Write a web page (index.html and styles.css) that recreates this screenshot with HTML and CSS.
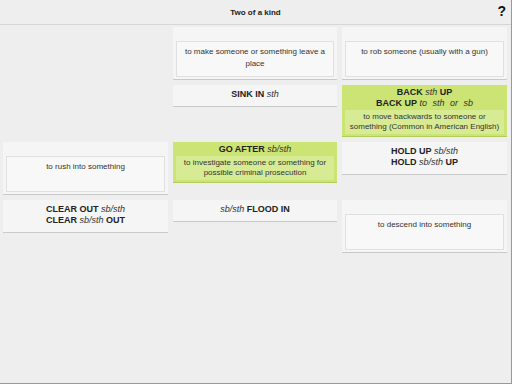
FILE: index.html
```html
<!DOCTYPE html>
<html lang="en">
  <head>
    <meta charset="UTF-8" />
    <meta name="viewport" content="width=device-width, initial-scale=1.0" />
    <title>Two of a kind</title>
    <link rel="stylesheet" href="styles.css">
  </head>
  <body>
    <div class="topbar">
      <span class="title">Two of a kind</span>
      <span class="help">?</span>
    </div>

    <div class="board">
      <div class="slot"></div>
      <div class="card def">
        <div class="meaning">to make someone or something leave a place</div>
      </div>
      <div class="card def">
        <div class="meaning">to rob someone (usually with a gun)</div>
      </div>

      <div class="slot"></div>
      <div class="card phrase">
        <p><b>SINK IN</b> <i>sth</i></p>
      </div>
      <div class="card phrase matched">
        <p><b>BACK</b> <i>sth</i> <b>UP</b></p>
        <p><b>BACK UP</b> <i class="spread">to sth or sb</i></p>
        <div class="meaning">to move backwards to someone or something (Common in American English)</div>
      </div>

      <div class="card def">
        <div class="meaning">to rush into something</div>
      </div>
      <div class="card phrase matched">
        <p><b>GO AFTER</b> <i>sb/sth</i></p>
        <div class="meaning">to investigate someone or something for possible criminal prosecution</div>
      </div>
      <div class="card phrase">
        <p><b>HOLD UP</b> <i>sb/sth</i></p>
        <p><b>HOLD</b> <i>sb/sth</i> <b>UP</b></p>
      </div>

      <div class="card phrase">
        <p><b>CLEAR OUT</b> <i>sb/sth</i></p>
        <p><b>CLEAR</b> <i>sb/sth</i> <b>OUT</b></p>
      </div>
      <div class="card phrase">
        <p><i>sb/sth</i> <b>FLOOD IN</b></p>
      </div>
      <div class="card def">
        <div class="meaning">to descend into something</div>
      </div>
    </div>
  </body>
</html>
```

FILE: styles.css
```css
html {
  background-color: #eee;
}
body {
  font-family: "Liberation Sans", Arial, sans-serif;
  color: #222;
  margin: 0;
  width: 512px;
  height: 384px;
  box-sizing: border-box;
  border-right: 1px solid #999;
  border-bottom: 1px solid #999;
  background-color: #eee;
}
.topbar {
  height: 24px;
  border-bottom: 1px solid #d6d6d6;
  display: flex;
  align-items: center;
  justify-content: center;
  position: relative;
}
.title {
  font-size: 8px;
  font-weight: bold;
  color: #222;
}
.help {
  position: absolute;
  right: 5px;
  top: 3px;
  font-size: 14px;
  font-weight: bold;
  color: #111;
}
.board {
  display: grid;
  grid-template-columns: 165px 164px 165px;
  column-gap: 5px;
  row-gap: 5px;
  align-items: start;
  padding: 2px 3px 0 3px;
}
.card {
  background-color: #f5f5f5;
  border-bottom: 1px solid #c9c9c9;
  text-align: center;
}
.def {
  padding: 14px 3px 2px 3px;
}
.def .meaning {
  background-color: #f8f8f8;
  border: 1px solid #e0e0e0;
  min-height: 28px;
  padding: 4px 6px 2px 6px;
  font-size: 8px;
  line-height: 12px;
  color: #333;
}
.phrase {
  padding: 4px 3px 6px 3px;
}
.phrase p {
  margin: 0;
  font-size: 9px;
  line-height: 11px;
}
.phrase i {
  color: #333;
}
.spread {
  word-spacing: 3px;
}
.matched {
  background-color: #cbe473;
  border-bottom: 1px solid #b4cc5c;
  padding: 2px 3px 2px 3px;
}
.matched .meaning {
  background-color: #d7eb95;
  margin-top: 1px;
  padding: 2px 4px 2px 4px;
  font-size: 8px;
  line-height: 10px;
  color: #333;
}
```
